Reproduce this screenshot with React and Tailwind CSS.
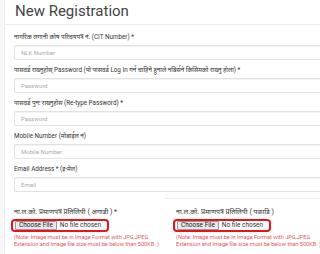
import React from 'react';

const fields = [
  { label: 'नागरिक लगानी कोष परिचयपत्र नं. (CIT Number) *', placeholder: 'NLK Number' },
  { label: 'पासवर्ड राख्नुहोस् Password (यो पासवर्ड Log In गर्न चाहिने हुनाले नबिर्सने किसिमको राख्नु होला) *', placeholder: 'Password' },
  { label: 'पासवर्ड पुनः राख्नुहोस (Re-type Password) *', placeholder: 'Password' },
  { label: 'Mobile Number (मोबाईल नं)', placeholder: 'Mobile Number' },
  { label: 'Email Address * (इ-मेल)', placeholder: 'Email' },
];

function FileBox({ label, className }) {
  return (
    <div className={className}>
      <div className="h-[9px] whitespace-nowrap text-[7px] leading-[9px] text-[#333]">{label}</div>
      <div className="mt-[2px] ml-[-3px] flex h-[13px] w-fit items-center gap-[3px] rounded-[4px] border-2 border-[#e8141c] px-[2px]">
        <span className="rounded-[1px] border border-[#9a9a9a] bg-[#e9e9e9] px-[3px] text-[6.5px] leading-[7px] text-[#222]">Choose File</span>
        <span className="pr-[4px] text-[6.5px] leading-[7px] text-[#333]">No file chosen</span>
      </div>
      <p className="mt-[2px] whitespace-nowrap text-[5.6px] leading-[7px] text-[#e4585b]">
        (Note: Image must be in Image Format with JPG,JPEG
        <br />
        Extension and Image file size must be below than 500KB. )
      </p>
    </div>
  );
}

export default function App() {
  return (
    <div className="h-[254px] w-[320px] overflow-hidden bg-[#f7f7f7] pl-[4px] font-['Roboto','Noto_Sans',sans-serif]">
      <div className="h-full border-l border-[#ececec] bg-white">
        <h1 className="h-[24px] pl-[10px] pt-[2px] text-[15px] leading-[18px] text-[#444]">New Registration</h1>
        <div className="h-px bg-[#ececec]" />
        <div className="pl-[9px] pt-[8px]">
          {fields.map((f, i) => (
            <div key={i} className="mb-[6px]">
              <div className="mb-[4px] h-[8px] whitespace-nowrap text-[6.3px] leading-[8px] text-[#333]">{f.label}</div>
              <div className="mr-[-8px] flex h-[15px] items-center rounded-[2px] border border-[#e2e2e2] pl-[6px] text-[6px] text-[#aaa] shadow-[inset_0_1px_1px_rgba(0,0,0,0.05)]">
                {f.placeholder}
              </div>
            </div>
          ))}
        </div>
        <div className="ml-[160px] h-px bg-[#eeeeee]" />
        <div className="flex pl-[9px] pt-[9px]">
          <FileBox className="w-[162px] shrink-0" label="ना.ल.को. प्रमाणपत्र प्रतिलिपी ( अगाडी ) *" />
          <FileBox className="flex-1" label="ना.ल.को. प्रमाणपत्र प्रतिलिपी ( पछाडि )" />
        </div>
      </div>
    </div>
  );
}
